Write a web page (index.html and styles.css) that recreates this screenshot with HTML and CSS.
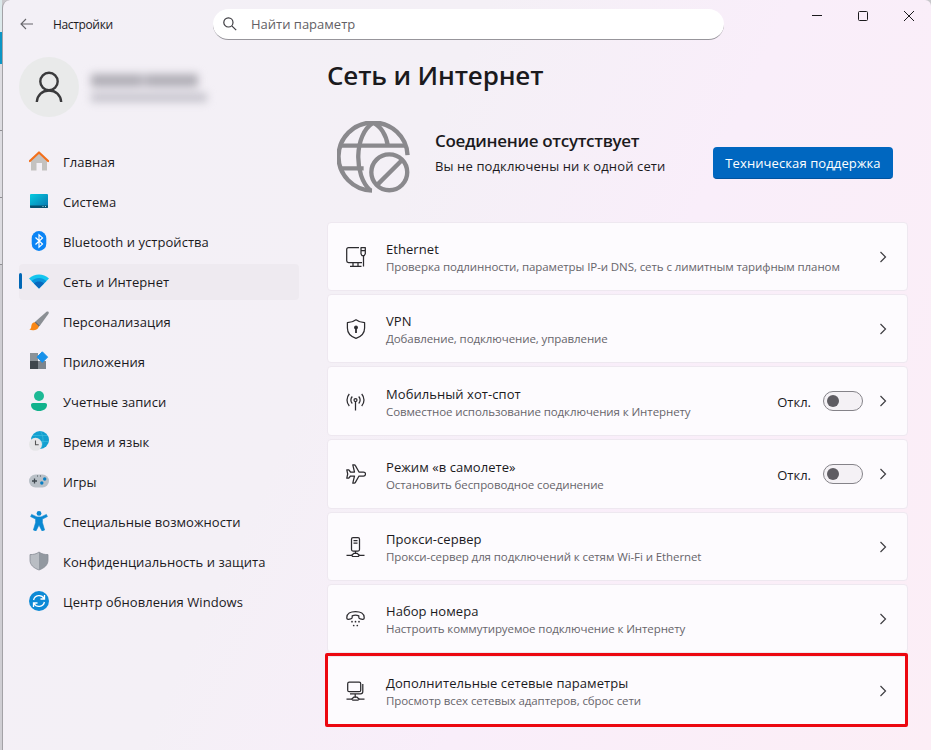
FILE: index.html
```html
<!DOCTYPE html>
<html lang="ru">
<head>
    <meta charset="UTF-8">
    <meta name="viewport" content="width=device-width, initial-scale=1.0">
    <title>Настройки</title>
    <link rel="stylesheet" href="styles.css">
</head>
<body>
    <!-- Край окна, которое лежит сзади -->
    <div class="behind">
        <div class="behind-top"></div>
        <div class="behind-tab"></div>
        <div class="behind-row"></div>
        <div class="behind-row"></div>
        <div class="behind-row"></div>
    </div>

    <div class="window">
        <header class="titlebar">
            <svg class="back" width="14" height="12" viewBox="0 0 14 12"><path d="M13 6H1M6 1L1 6l5 5"/></svg>
            <span class="app-name">Настройки</span>
            <div class="search">
                <svg width="14" height="14" viewBox="0 0 14 14"><circle cx="5.4" cy="5.4" r="4.6"/><path d="M8.8 8.8l4.4 4.4"/></svg>
                <span>Найти параметр</span>
            </div>
            <div class="controls">
                <svg width="12" height="12" viewBox="0 0 12 12"><path d="M1 5.5h10"/></svg>
                <svg width="12" height="12" viewBox="0 0 12 12"><rect x="1.5" y="1.5" width="9" height="9" rx="1"/></svg>
                <svg width="12" height="12" viewBox="0 0 12 12"><path d="M1 1l10 10M11 1L1 11"/></svg>
            </div>
        </header>

        <div class="content">
            <aside class="sidebar">
                <div class="user">
                    <div class="avatar">
                        <svg width="28" height="32" viewBox="0 0 28 32"><circle cx="14" cy="10.5" r="8.7"/><path d="M1.8 31c.5-7 5.500-11.500 12.200-11.500S25.700 24 26.200 31"/></svg>
                    </div>
                    <div class="user-text">
                        <div class="user-name"></div>
                        <div class="user-mail"></div>
                    </div>
                </div>

                <nav class="menu">
                    <a class="menu-item">
                        <svg viewBox="0 0 20 20">
                            <path d="M2 9l8-7 8 7v10.500h-5V12H7.500v7.500H2z" fill="#c4c2c0"/>
                            <path d="M.9 10L10 1.500 19.100 10" fill="none" stroke="#f3701c" stroke-width="2.200" stroke-linejoin="round" stroke-linecap="round"/>
                        </svg>
                        <span>Главная</span>
                    </a>
                    <a class="menu-item">
                        <svg viewBox="0 0 20 20">
                            <defs><linearGradient id="screen" x1="0" y1="0" x2="1" y2="1"><stop offset="0" stop-color="#05cce0"/><stop offset="1" stop-color="#0873ae"/></linearGradient></defs>
                            <rect x="1" y="3" width="18" height="14" rx="1" fill="url(#screen)"/>
                            <path d="M1 14.500h18V16a1 1 0 0 1-1 1H2a1 1 0 0 1-1-1z" fill="#06506f"/>
                            <path d="M13.500 15.500h1M16 15.500h1" stroke="#9be3f2"/>
                        </svg>
                        <span>Система</span>
                    </a>
                    <a class="menu-item">
                        <svg viewBox="0 0 20 20">
                            <rect x="2.700" y="0" width="14.600" height="20" rx="7.300" fill="#0a84f5"/>
                            <path d="M6.500 6.500l7 6.600-3.500 3.100V3.800l3.500 3.100-7 6.600" fill="none" stroke="#fff" stroke-width="1.200"/>
                        </svg>
                        <span>Bluetooth и устройства</span>
                    </a>
                    <a class="menu-item active">
                        <svg viewBox="0 0 20 20">
                            <path d="M0 7.500C5.800 2 14.200 2 20 7.500L10 17.500z" fill="#14c5ee"/>
                            <path d="M2.600 10.100c4.300-4 10.500-4 14.800 0L10 17.500z" fill="#0a94dc"/>
                            <path d="M5 12.500c3-2.600 7-2.600 10 0l-5 5z" fill="#0868bd"/>
                        </svg>
                        <span>Сеть и Интернет</span>
                    </a>
                    <a class="menu-item">
                        <svg viewBox="0 0 20 20">
                            <path d="M17.500.8c1.500-1 2.900.4 2 1.900L11 14.500 6.700 10.300z" fill="#8b8f94"/>
                            <path d="M6.700 10.300l4.300 4.200-1.700 1.400-3.800-3.800z" fill="#66696e"/>
                            <path d="M5.700 11.300c-3.200.3-3.200 3.200-3.500 5-.2 1-1 1.900-2 2.300 3.800 1.600 9.300.5 9.500-3.400z" fill="#fa8714"/>
                        </svg>
                        <span>Персонализация</span>
                    </a>
                    <a class="menu-item">
                        <svg viewBox="0 0 20 20">
                            <rect x="1" y="2" width="8" height="8" fill="#8b9298"/>
                            <rect x="1" y="10" width="8" height="8" fill="#3f464d"/>
                            <rect x="9" y="10" width="8" height="8" fill="#7d858d"/>
                            <path d="M13.300.8l5.300 5.300-5.300 5.300L8 6.100z" fill="#1791ea" stroke="#1791ea" stroke-linejoin="round"/>
                        </svg>
                        <span>Приложения</span>
                    </a>
                    <a class="menu-item">
                        <svg viewBox="0 0 20 20">
                            <circle cx="10" cy="5" r="5" fill="#1db995"/>
                            <path d="M4 12h12c1.200 0 2 .8 2 2 0 3.800-3.600 6-8 6s-8-2.200-8-6c0-1.200.8-2 2-2z" fill="#12b28c"/>
                        </svg>
                        <span>Учетные записи</span>
                    </a>
                    <a class="menu-item">
                        <svg viewBox="0 0 20 20">
                            <circle cx="11" cy="9" r="9" fill="#139fd0"/>
                            <path d="M11 0c4 4 4 14 0 18M4 4.500h14M11 10.500h9" fill="none" stroke="#3cbcdc" stroke-width=".7"/>
                            <circle cx="6.500" cy="13.300" r="6.500" fill="#e6e6e8"/>
                            <path d="M6.500 9.500v4.300h3.200" fill="none" stroke="#555" stroke-width="1.100"/>
                        </svg>
                        <span>Время и язык</span>
                    </a>
                    <a class="menu-item">
                        <svg viewBox="0 0 20 20">
                            <rect x="0" y="3.500" width="20" height="13" rx="6.500" fill="#b9c0c7"/>
                            <path d="M5.500 7.500v5M3 10h5" stroke="#3f474f" stroke-width="1.300"/>
                            <path d="M8 5h1M11 5h1" stroke="#4a5259"/>
                            <circle cx="15.700" cy="8" r="1.700" fill="#087ec4"/>
                            <circle cx="12.800" cy="12" r="1.700" fill="#087ec4"/>
                        </svg>
                        <span>Игры</span>
                    </a>
                    <a class="menu-item">
                        <svg viewBox="0 0 20 20">
                            <circle cx="10" cy="2.400" r="2.400" fill="#0a88d2"/>
                            <path d="M2.600 3.400L8 5.900h4l5.400-2.500 1 2.200-5 2.500v3.400l2.200 7.500-2.600.9L10 14l-3 5.900-2.600-.9 2.200-7.500V8.100l-5-2.500z" fill="#0a88d2" stroke="#0a88d2" stroke-width=".6" stroke-linejoin="round"/>
                        </svg>
                        <span>Специальные возможности</span>
                    </a>
                    <a class="menu-item">
                        <svg viewBox="0 0 20 20">
                            <path d="M10 1c2.500 2 5.500 2.600 9 2.600V9c0 5-3.600 8-9 10z" fill="#9298a0"/>
                            <path d="M10 1C7.500 3 4.500 3.600 1 3.600V9c0 5 3.600 8 9 10z" fill="#b9bdc3"/>
                            <path d="M10 1c2.500 2 5.500 2.600 9 2.600V9c0 5-3.600 8-9 10-5.400-2-9-5-9-10V3.600C4.500 3.600 7.500 3 10 1z" fill="none" stroke="#868c94" stroke-width=".8"/>
                        </svg>
                        <span>Конфиденциальность и защита</span>
                    </a>
                    <a class="menu-item">
                        <svg viewBox="0 0 20 20">
                            <circle cx="10" cy="10" r="10" fill="#0d8ad6"/>
                            <path d="M4.600 9A5.600 5.600 0 0 1 15 7.500M15.500 4v4h-4M15.400 11A5.600 5.600 0 0 1 5 12.500M4.500 16v-4h4" fill="none" stroke="#fff" stroke-width="1.300"/>
                        </svg>
                        <span>Центр обновления Windows</span>
                    </a>
                </nav>
            </aside>

            <main class="main">
                <h1>Сеть и Интернет</h1>

                <section class="status">
                    <svg class="globe" width="73" height="73" viewBox="0 0 74 74">
                        <path d="M71.500 34.500A35 34.500 0 1 0 35.500 70.500"/>
                        <path d="M4 25h66M4 48h23"/>
                        <path d="M36.500 2C17 14 17 56 34 70.500M37 2c7 3 13 12 14.500 23"/>
                        <circle cx="53" cy="52" r="18.200"/>
                        <path d="M40.500 65L66 39.500"/>
                    </svg>
                    <div class="status-text">
                        <h2>Соединение отсутствует</h2>
                        <p>Вы не подключены ни к одной сети</p>
                    </div>
                    <button class="support">Техническая поддержка</button>
                </section>

                <section class="cards">
                    <div class="card">
                        <svg class="card-icon" viewBox="0 0 20 20"><path d="M13 .7H2.500Q.7.700.7 2.500v11.300q0 1.700 1.800 1.700H16M7 15.500v3.800M12 15.500v3.800M4 19.300h11.500M17.500 8.500v11"/><path d="M15 .7h4.300v6l-1 1.800h-2.400l-.9-1.800zM15 3.500h4.300"/></svg>
                        <div class="card-text">
                            <h3>Ethernet</h3>
                            <p>Проверка подлинности, параметры IP-и DNS, сеть с лимитным тарифным планом</p>
                        </div>
                        <svg class="chevron" viewBox="0 0 8 12"><path d="M1.500 1l5 5-5 5"/></svg>
                    </div>
                    <div class="card">
                        <svg class="card-icon" viewBox="0 0 20 20"><path d="M10 .8c2.400 1.900 5.200 2.700 8.600 2.900V9c0 5.300-3.400 8.600-8.600 10.400C4.800 17.600 1.400 14.300 1.400 9V3.700C4.800 3.500 7.600 2.700 10 .8z"/><circle cx="10" cy="8.500" r="1.300" class="solid"/><path d="M10 9v5" stroke-width="1.800"/></svg>
                        <div class="card-text">
                            <h3>VPN</h3>
                            <p>Добавление, подключение, управление</p>
                        </div>
                        <svg class="chevron" viewBox="0 0 8 12"><path d="M1.500 1l5 5-5 5"/></svg>
                    </div>
                    <div class="card card-toggle">
                        <svg class="card-icon" viewBox="0 0 20 20"><circle cx="9.500" cy="9" r="1.500"/><path d="M9.500 10.500v9M6.300 12.500a5 5 0 0 1 0-7M12.700 12.500a5 5 0 0 0 0-7M3.300 15a9 9 0 0 1 0-12M15.700 15a9 9 0 0 0 0-12"/></svg>
                        <div class="card-text">
                            <h3>Мобильный хот-спот</h3>
                            <p>Совместное использование подключения к Интернету</p>
                        </div>
                        <span class="state">Откл.</span>
                        <div class="toggle"></div>
                        <svg class="chevron" viewBox="0 0 8 12"><path d="M1.500 1l5 5-5 5"/></svg>
                    </div>
                    <div class="card card-toggle">
                        <svg class="card-icon" viewBox="0 0 20 20"><path d="M6.800.8h1.500q.7 0 1.100.8L13 8h4.500q2 0 2 2t-2 2H13l-3.600 6.400q-.4.800-1.100.8H6.800L8.500 12H4.500l-1.700 2.200H.8L1.700 10 .8 5.800h2L4.500 8h4z"/></svg>
                        <div class="card-text">
                            <h3>Режим «в самолете»</h3>
                            <p>Остановить беспроводное соединение</p>
                        </div>
                        <span class="state">Откл.</span>
                        <div class="toggle"></div>
                        <svg class="chevron" viewBox="0 0 8 12"><path d="M1.500 1l5 5-5 5"/></svg>
                    </div>
                    <div class="card">
                        <svg class="card-icon" viewBox="0 0 20 20"><rect x="5.500" y=".7" width="8" height="13.300" rx="1.500"/><path d="M7.500 3.500h4M7.500 6h4M9.500 14v2.500M.5 18.300h5.300M13.200 18.300h5.300"/><path d="M8 16.300h3l2.300 2-1 1.200H6.700l-1-1.200z"/></svg>
                        <div class="card-text">
                            <h3>Прокси-сервер</h3>
                            <p>Прокси-сервер для подключений к сетям Wi-Fi и Ethernet</p>
                        </div>
                        <svg class="chevron" viewBox="0 0 8 12"><path d="M1.500 1l5 5-5 5"/></svg>
                    </div>
                    <div class="card">
                        <svg class="card-icon" viewBox="0 0 20 20"><path d="M.8 8.500C.8 4.800 4.500 2.500 9.500 2.500s8.700 2.300 8.700 6c0 1.500-.6 2-1.700 1.800l-2.200-.4c-1-.2-1.500-.8-1.500-1.700V6.800c-2-.7-4.600-.7-6.600 0v1.400c0 .9-.5 1.500-1.500 1.700l-2.200.4C1.400 10.500.8 10 .8 8.500z"/><path class="dots" d="M6 12.700h0M9.500 12.700h0M13 12.700h0M7.700 16.500h0M11.300 16.500h0"/></svg>
                        <div class="card-text">
                            <h3>Набор номера</h3>
                            <p>Настроить коммутируемое подключение к Интернету</p>
                        </div>
                        <svg class="chevron" viewBox="0 0 8 12"><path d="M1.500 1l5 5-5 5"/></svg>
                    </div>
                    <div class="card highlight">
                        <svg class="card-icon" viewBox="0 0 20 20"><rect x="1.700" y="1.200" width="13" height="9.500" rx="1.500"/><path d="M16.800 3v7.500q0 2.300-2.300 2.300H4M9.200 13v3.500M.5 18h5.300M13 18h5.500"/><path d="M8 16h2.800l2.200 2-1 1.200H6.800l-1-1.200z"/></svg>
                        <div class="card-text">
                            <h3>Дополнительные сетевые параметры</h3>
                            <p>Просмотр всех сетевых адаптеров, сброс сети</p>
                        </div>
                        <svg class="chevron" viewBox="0 0 8 12"><path d="M1.500 1l5 5-5 5"/></svg>
                    </div>
                </section>
            </main>
        </div>
    </div>
</body>
</html>
```
FILE: styles.css
```css
* {
    box-sizing: border-box;
}
body {
    margin: 0;
    height: 750px;
    display: flex;
    overflow: hidden;
    background-color: #c9c8cc;
    font-family: "Open Sans", "Noto Sans", sans-serif;
    font-size: 13px;
    color: #1b1a1d;
}
h1, h2, h3, p {
    margin: 0;
}
svg {
    display: block;
    flex-shrink: 0;
}

/* Полоска слева */
.behind {
    width: 2px;
    background: #cfced3;
}
.behind-top {
    height: 32px;
    background: #dbe8ea;
}
.behind-tab {
    height: 32px;
    background: #0b96c5;
}
.behind-row {
    height: 67px;
    border-bottom: 1px solid #8f8e93;
    background: #dddce1;
}

.window {
    flex: 1;
    border-left: 1px solid #a3a2a6;
    border-radius: 8px 6px 0 0;
    background: linear-gradient(115deg, #f3f0f6 0%, #f4f0f6 38%, #f9eefa 62%, #fceef6 100%);
}

/* Заголовок окна */
.titlebar {
    display: flex;
    height: 48px;
    padding-left: 17px;
}
.back {
    margin-top: 18px;
    fill: none;
    stroke: #66656a;
    stroke-width: 1.1;
}
.app-name {
    width: 140px;
    margin-left: 19px;
    padding-top: 17px;
    font-size: 12px;
    line-height: 16px;
    letter-spacing: -0.35px;
}
.search {
    display: flex;
    align-items: center;
    width: 511px;
    height: 31px;
    margin-top: 9px;
    margin-left: 20px;
    padding-left: 10px;
    border-radius: 16px;
    border-bottom: 1px solid #97959b;
    background: #fff;
    color: #626065;
}
.search svg {
    margin-right: 14px;
    fill: none;
    stroke: #3c3b40;
    stroke-width: 1.2;
}
.controls {
    display: flex;
    gap: 34px;
    margin-left: 87px;
    padding-top: 10px;
}
.controls svg {
    fill: none;
    stroke: #1b1a1d;
    stroke-width: 1;
}

.content {
    display: flex;
}

/* Боковая панель */
.sidebar {
    width: 324px;
    padding: 9px 0 0 16px;
}
.user {
    display: flex;
    height: 87px;
}
.avatar {
    display: flex;
    justify-content: center;
    align-items: center;
    width: 60px;
    height: 60px;
    border-radius: 50%;
    background: #e9eaea;
}
.avatar svg {
    fill: none;
    stroke: #3a3a3c;
    stroke-width: 2.4;
}
.user-text {
    padding: 17px 0 0 12px;
    filter: blur(4px);
}
.user-name {
    width: 107px;
    height: 13px;
    background: linear-gradient(to right, #b0aeb6 45%, #c6c4cc 49%, #b0aeb6 54%);
}
.user-mail {
    width: 116px;
    height: 9px;
    margin-top: 6px;
    background: #c5c3cc;
}
.menu {
    display: flex;
    flex-direction: column;
    gap: 4px;
}
.menu-item {
    position: relative;
    display: flex;
    align-items: center;
    width: 280px;
    height: 36px;
    padding-left: 10px;
    border-radius: 4px;
    letter-spacing: 0.05px;
}
.menu-item svg {
    width: 20px;
    height: 20px;
    margin: -2px 14px 0 0;
}
.menu-item.active {
    background: #eeeaf0;
}
.menu-item.active::before {
    content: "";
    position: absolute;
    left: 0;
    top: 9px;
    width: 3px;
    height: 16px;
    border-radius: 2px;
    background: #0067b5;
}

/* Основная часть */
.main {
    width: 581px;
}
h1 {
    padding-top: 7px;
    font-size: 26px;
    line-height: 40px;
    font-weight: 600;
    letter-spacing: -0.15px;
}
.status {
    display: flex;
    height: 127px;
    padding-top: 25px;
}
.globe {
    margin: 1px 0 0 10px;
    fill: none;
    stroke: #8a898d;
    stroke-width: 4.4;
}
.status-text {
    flex: 1;
    padding: 8px 0 0 25px;
}
.status-text h2 {
    font-size: 17px;
    line-height: 26px;
    font-weight: 600;
    letter-spacing: -0.3px;
}
.status-text p {
    line-height: 24px;
    letter-spacing: 0.12px;
}
.support {
    width: 180px;
    height: 32px;
    margin: 27px 15px 0 0;
    padding: 0;
    border: 0;
    border-bottom: 1px solid #00539f;
    border-radius: 4px;
    background: #0067c0;
    color: #fff;
    font-family: inherit;
    font-size: 13px;
    letter-spacing: 0.1px;
}
.cards {
    display: flex;
    flex-direction: column;
    gap: 3px;
}
.card {
    position: relative;
    display: flex;
    align-items: center;
    height: 69px;
    padding: 0 20px 0 18px;
    border: 1px solid #eee8f0;
    border-radius: 4px;
    background: #fdfbfe;
}
.card-toggle {
    height: 70px;
}
.card-icon {
    width: 20px;
    height: 20px;
    margin-right: 20px;
    fill: none;
    stroke: #2c2b2f;
    stroke-width: 1.25;
    stroke-linejoin: round;
}
.card-icon .solid {
    fill: #2c2b2f;
}
.card-icon .dots {
    stroke-width: 1.7;
    stroke-linecap: round;
}
.card-text {
    flex: 1;
    padding-top: 3px;
}
.card-text h3 {
    font-size: 13px;
    line-height: 18px;
    font-weight: 400;
    letter-spacing: 0.06px;
}
.card-text p {
    font-size: 11.5px;
    line-height: 18px;
    letter-spacing: -0.09px;
    color: #67656b;
}
.state {
    padding-top: 2px;
}
.toggle {
    display: flex;
    align-items: center;
    width: 40px;
    height: 20px;
    margin: 0 16px 0 12px;
    padding-left: 3px;
    border: 1px solid #858389;
    border-radius: 10px;
    background: #f4f1f5;
}
.toggle::before {
    content: "";
    width: 12px;
    height: 12px;
    border-radius: 50%;
    background: #5e5c62;
}
.chevron {
    width: 8px;
    height: 12px;
    fill: none;
    stroke: #3e3d42;
    stroke-width: 1.2;
}

/* Красная рамка вокруг последнего пункта */
.highlight::after {
    content: "";
    position: absolute;
    top: -4px;
    right: -1px;
    bottom: -3px;
    left: -3px;
    border: 3px solid #ec0710;
    border-radius: 2px;
}
```
